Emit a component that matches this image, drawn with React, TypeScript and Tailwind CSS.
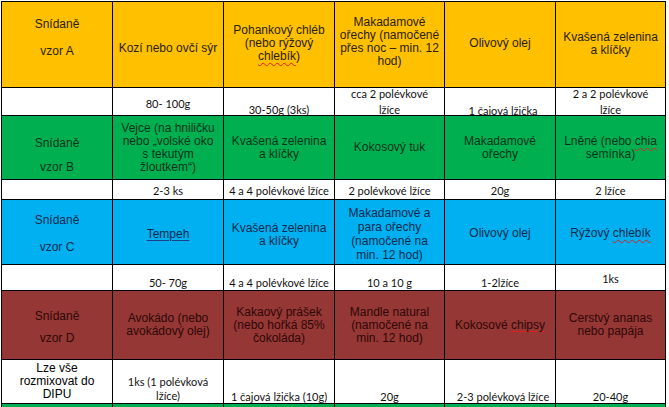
import React from "react";

const arial = "font-['Liberation_Sans',Arial,sans-serif] text-[12px] leading-[13px]";
const cal = "font-['Lato',sans-serif] text-[11px]";
const base = "flex justify-center text-center whitespace-nowrap overflow-visible";

const ORANGE = "bg-[#ffc000] text-[#2b2200]";
const GREEN = "bg-[#00b050] text-[#05331a]";
const BLUE = "bg-[#00b0f0] text-[#082a4f]";
const RED = "bg-[#953735] text-[#2e0808]";
const WHITE = "bg-white text-[#111111]";

function Lines({ lines }: { lines: React.ReactNode[] }) {
  return (
    <div>
      {lines.map((l, i) => (
        <div key={i}>{l}</div>
      ))}
    </div>
  );
}

function Sq({ children }: { children: React.ReactNode }) {
  return (
    <span className="underline decoration-wavy decoration-[#e02020] decoration-1 underline-offset-2">
      {children}
    </span>
  );
}

export default function App() {
  return (
    <div className="w-[669px] h-[407px] overflow-hidden bg-white">
      <div className="ml-px mt-px inline-grid bg-black p-px gap-px grid-cols-[110px_110px_110px_109px_110px_109px] grid-rows-[85px_27px_63px_19px_64px_25px_68px_43px_20px]">
        {/* Row A */}
        <div className={`${base} ${arial} ${ORANGE} flex-col items-center gap-[14px] pb-[13px]`}>
          <span>Snídaně</span>
          <span>vzor A</span>
        </div>
        <div className={`${base} ${arial} ${ORANGE} items-center pt-[8px]`}>
          <Lines lines={["Kozí nebo ovčí sýr"]} />
        </div>
        <div className={`${base} ${arial} ${ORANGE} items-center pb-[3px]`}>
          <Lines lines={["Pohankový chléb", "(nebo rýžový", <Sq>chlebík</Sq>, ")"].slice(0, 2).concat([<span><Sq>chlebík</Sq>)</span>])} />
        </div>
        <div className={`${base} ${arial} ${ORANGE} items-center pb-[5px]`}>
          <Lines lines={["Makadamové", "ořechy (namočené", "přes noc – min. 12", "hod)"]} />
        </div>
        <div className={`${base} ${arial} ${ORANGE} items-center pb-[3px]`}>
          <Lines lines={["Olivový olej"]} />
        </div>
        <div className={`${base} ${arial} ${ORANGE} items-center pb-[2px]`}>
          <Lines lines={["Kvašená zelenina", "a klíčky"]} />
        </div>

        {/* Row A amounts */}
        <div className={`${WHITE}`} />
        <div className={`${base} ${cal} ${WHITE} items-start pt-[8px] leading-[15px]`}>80- 100g</div>
        <div className={`${base} ${cal} ${WHITE} items-start pt-[14px] leading-[15px]`}>30-50g (3ks)</div>
        <div className={`${base} ${cal} ${WHITE} items-start leading-[16px]`}>
          <div className="-mt-[2px]">
            <Lines lines={["cca 2 polévkové", "lžíce"]} />
          </div>
        </div>
        <div className={`${base} ${cal} ${WHITE} items-start pt-[15px] leading-[15px] pl-[6px]`}>1 čajová lžička</div>
        <div className={`${base} ${cal} ${WHITE} items-start leading-[16px]`}>
          <div className="-mt-[2px]">
            <Lines lines={["2 a 2 polévkové", "lžíce"]} />
          </div>
        </div>

        {/* Row B */}
        <div className={`${base} ${arial} ${GREEN} flex-col items-center gap-[11px] pt-[15px]`}>
          <span>Snídaně</span>
          <span>vzor B</span>
        </div>
        <div className={`${base} ${arial} ${GREEN} items-center leading-[13.3px]`}>
          <Lines lines={["Vejce (na hniličku", "nebo „volské oko", "s tekutým", "žloutkem“)"]} />
        </div>
        <div className={`${base} ${arial} ${GREEN} items-center`}>
          <Lines lines={["Kvašená zelenina", "a klíčky"]} />
        </div>
        <div className={`${base} ${arial} ${GREEN} items-center`}>
          <Lines lines={["Kokosový tuk"]} />
        </div>
        <div className={`${base} ${arial} ${GREEN} items-center`}>
          <Lines lines={["Makadamové", "ořechy"]} />
        </div>
        <div className={`${base} ${arial} ${GREEN} items-center`}>
          <Lines lines={[<span>Lněné (nebo <Sq>chia</Sq></span>, "semínka)"]} />
        </div>

        {/* Row B amounts */}
        <div className={`${WHITE}`} />
        <div className={`${base} ${cal} ${WHITE} items-center leading-[15px] pt-[2px]`}>2-3 ks</div>
        <div className={`${base} ${cal} ${WHITE} items-center leading-[15px] pt-[2px]`}>4 a 4 polévkové lžíce</div>
        <div className={`${base} ${cal} ${WHITE} items-center leading-[15px] pt-[2px]`}>2 polévkové lžíce</div>
        <div className={`${base} ${cal} ${WHITE} items-center leading-[15px] pt-[2px]`}>20g</div>
        <div className={`${base} ${cal} ${WHITE} items-center leading-[15px] pt-[2px]`}>2 lžíce</div>

        {/* Row C */}
        <div className={`${base} ${arial} ${BLUE} flex-col items-center gap-[14px] pt-[3px]`}>
          <span>Snídaně</span>
          <span>vzor C</span>
        </div>
        <div className={`${base} ${arial} ${BLUE} items-center pt-[4px]`}>
          <span className="underline decoration-[#1d3f8a] underline-offset-2">Tempeh</span>
        </div>
        <div className={`${base} ${arial} ${BLUE} items-center pt-[5px]`}>
          <Lines lines={["Kvašená zelenina", "a klíčky"]} />
        </div>
        <div className={`${base} ${arial} ${BLUE} items-center pt-[4px] leading-[14px]`}>
          <Lines lines={["Makadamové a", "para ořechy", "(namočené na", "min. 12 hod)"]} />
        </div>
        <div className={`${base} ${arial} ${BLUE} items-center pt-[3px]`}>
          <Lines lines={["Olivový olej"]} />
        </div>
        <div className={`${base} ${arial} ${BLUE} items-center pt-[3px]`}>
          <span>
            Rýžový <Sq>chlebík</Sq>
          </span>
        </div>

        {/* Row C amounts */}
        <div className={`${WHITE}`} />
        <div className={`${base} ${cal} ${WHITE} items-end leading-[15px]`}>50- 70g</div>
        <div className={`${base} ${cal} ${WHITE} items-end leading-[15px]`}>4 a 4 polévkové lžíce</div>
        <div className={`${base} ${cal} ${WHITE} items-end leading-[15px]`}>10 a 10 g</div>
        <div className={`${base} ${cal} ${WHITE} items-end leading-[15px]`}>1-2lžíce</div>
        <div className={`${base} ${cal} ${WHITE} items-end leading-[15px] pb-[4px]`}>1ks</div>

        {/* Row D */}
        <div className={`${base} ${arial} ${RED} flex-col items-center gap-[9px] pt-[5px]`}>
          <span>Snídaně</span>
          <span>vzor D</span>
        </div>
        <div className={`${base} ${arial} ${RED} items-center`}>
          <Lines lines={["Avokádo (nebo", "avokádový olej)"]} />
        </div>
        <div className={`${base} ${arial} ${RED} items-center leading-[12.5px]`}>
          <Lines lines={["Kakaový prášek", "(nebo hořká 85%", "čokoláda)"]} />
        </div>
        <div className={`${base} ${arial} ${RED} items-center leading-[12.5px]`}>
          <Lines lines={["Mandle natural", "(namočené na", "min. 12 hod)"]} />
        </div>
        <div className={`${base} ${arial} ${RED} items-center`}>
          <span>
            Kokosové{" "}
            <span className="underline decoration-[#e02020] decoration-1 underline-offset-2">chipsy</span>
          </span>
        </div>
        <div className={`${base} ${arial} ${RED} items-center`}>
          <Lines lines={["Cerstvý ananas", "nebo papája"]} />
        </div>

        {/* Row D amounts */}
        <div className={`${base} ${arial} ${WHITE} items-center leading-[12.5px] text-black`}>
          <Lines lines={["Lze vše", "rozmixovat do", "DIPU"]} />
        </div>
        <div className={`${base} ${cal} ${WHITE} items-end leading-[14px]`}>
          <Lines lines={["1ks (1 polévková", "lžíce)"]} />
        </div>
        <div className={`${base} ${cal} ${WHITE} items-end leading-[13px]`}>1 čajová lžička (10g)</div>
        <div className={`${base} ${cal} ${WHITE} items-end leading-[13px]`}>20g</div>
        <div className={`${base} ${cal} ${WHITE} items-end leading-[13px] pl-[6px]`}>2-3 polévková lžíce</div>
        <div className={`${base} ${cal} ${WHITE} items-end leading-[13px]`}>20-40g</div>

        {/* Last (cut) row */}
        <div className="bg-[#00b050]" />
        <div className="bg-[#00b050]" />
        <div className="bg-[#00b050]" />
        <div className="bg-[#00b050]" />
        <div className="bg-[#00b050]" />
        <div className="bg-[#00b050]" />
      </div>
    </div>
  );
}
